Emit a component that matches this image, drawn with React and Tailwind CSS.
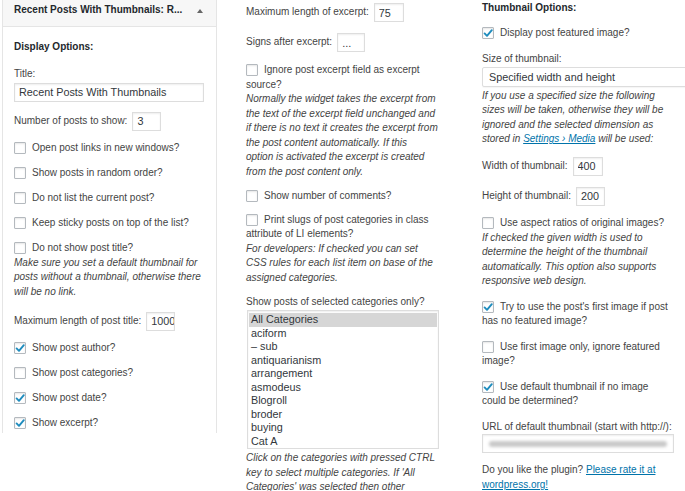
import React from 'react';

// small WordPress-style form bits
function Box({ checked }) {
    return (
        <span className="relative inline-block w-[12px] h-[12px] mr-[6px] align-[-3px] bg-white border border-[#b4b9be] rounded-[1px] shadow-[inset_0_1px_2px_rgba(0,0,0,0.1)]">
            {checked && (
                <svg viewBox="0 0 12 12" className="absolute left-[-1px] top-[-1px] w-[12px] h-[12px]">
                    <path d="M2.6 6.4 L5 8.8 L9.8 3.2" fill="none" stroke="#1e8cbe" strokeWidth="1.9" strokeLinecap="round" strokeLinejoin="round" />
                </svg>
            )}
        </span>
    );
}

function Field({ value, className }) {
    return (
        <input
            readOnly
            value={value}
            className={`h-[19px] border border-[#dddddd] bg-white pl-[4px] text-[10.8px] text-[#32373c] shadow-[inset_0_1px_2px_rgba(0,0,0,0.07)] outline-none ${className}`}
        />
    );
}

function Check({ checked, className = 'mt-[10.5px]', children }) {
    return (
        <p className={className}>
            <Box checked={checked} />
            {children}
        </p>
    );
}

const categories = ['All Categories', 'aciform', '– sub', 'antiquarianism', 'arrangement', 'asmodeus', 'Blogroll', 'broder', 'buying', 'Cat A'];

export default function App() {
    return (
        <div className="w-[685px] h-[491px] overflow-hidden bg-white flex items-start text-[10px] leading-[14.5px] text-[#444] font-['Liberation_Sans',Arial,sans-serif]">
            {/* Widget panel */}
            <div className="ml-[2px] w-[215px] h-[433px] shrink-0 border-x border-[#e5e5e5]">
                <div className="h-[27px] pb-[5px] pl-[11px] pr-[13px] flex items-center justify-between bg-[#f7f7f7] border-b border-[#e5e5e5]">
                    <span className="font-bold text-[#23282d]">Recent Posts With Thumbnails: R...</span>
                    <svg width="6" height="4" viewBox="0 0 6 4"><polygon points="0,4 3,0 6,4" fill="#666" /></svg>
                </div>
                <div className="pl-[11px] pt-[13px]">
                    <p className="font-bold text-[#23282d]">Display Options:</p>
                    <p className="mt-[12.5px]">Title:</p>
                    <Field value="Recent Posts With Thumbnails" className="mt-[1px] w-[190px]" />
                    <div className="mt-[10px] flex items-center gap-[5px]">
                        <span>Number of posts to show:</span>
                        <Field value="3" className="w-[29px]" />
                    </div>
                    <Check>Open post links in new windows?</Check>
                    <Check>Show posts in random order?</Check>
                    <Check>Do not list the current post?</Check>
                    <Check>Keep sticky posts on top of the list?</Check>
                    <Check>Do not show post title?</Check>
                    <em className="block">
                        Make sure you set a default thumbnail for<br />
                        posts without a thumbnail, otherwise there<br />
                        will be no link.
                    </em>
                    <div className="mt-[12.5px] flex items-center gap-[5px]">
                        <span>Maximum length of post title:</span>
                        <Field value="1000" className="w-[29px]" />
                    </div>
                    <Check checked>Show post author?</Check>
                    <Check>Show post categories?</Check>
                    <Check checked>Show post date?</Check>
                    <Check checked>Show excerpt?</Check>
                </div>
            </div>

            {/* Middle column */}
            <div className="ml-[29px] w-[197px] shrink-0 pt-[3px]">
                <div className="flex items-center gap-[5px]">
                    <span>Maximum length of excerpt:</span>
                    <Field value="75" className="w-[30px]" />
                </div>
                <div className="mt-[11px] flex items-center gap-[5px]">
                    <span>Signs after excerpt:</span>
                    <Field value="..." className="w-[28px] h-[18px]" />
                </div>
                <Check className="mt-[11px]">
                    Ignore post excerpt field as excerpt<br />source?
                    <em className="block">
                        Normally the widget takes the excerpt from<br />
                        the text of the excerpt field unchanged and<br />
                        if there is no text it creates the excerpt from<br />
                        the post content automatically. If this<br />
                        option is activated the excerpt is created<br />
                        from the post content only.
                    </em>
                </Check>
                <Check className="mt-[9.5px]">Show number of comments?</Check>
                <Check className="mt-[9.5px]">
                    Print slugs of post categories in class<br />attribute of LI elements?
                    <em className="block">
                        For developers: If checked you can set<br />
                        CSS rules for each list item on base of the<br />
                        assigned categories.
                    </em>
                </Check>
                <p className="mt-[9.5px]">Show posts of selected categories only?</p>
                <div className="mt-[1px] ml-[1px] w-[192px] h-[139px] border border-[#dddddd] bg-white pt-[2px] px-[1px] text-[10.8px] leading-[13.5px] text-[#32373c] shadow-[inset_0_1px_2px_rgba(0,0,0,0.07)]">
                    {categories.map((c, i) => (
                        <div key={c} className={`px-[2px] ${i === 0 ? 'bg-[#d6d6d6]' : ''}`}>{c}</div>
                    ))}
                </div>
                <em className="block mt-[2px]">
                    Click on the categories with pressed CTRL<br />
                    key to select multiple categories. If 'All<br />
                    Categories' was selected then other
                </em>
            </div>

            {/* Thumbnail column */}
            <div className="ml-[39px] w-[203px] shrink-0 pt-[1px]">
                <p className="font-bold text-[#23282d]">Thumbnail Options:</p>
                <Check checked>Display post featured image?</Check>
                <p className="mt-[11.5px]">Size of thumbnail:</p>
                <div className="mt-[0.5px] w-[215px] h-[20px] flex items-center pl-[6px] border border-[#dddddd] rounded-[2px] bg-white text-[10.8px] text-[#32373c] shadow-[0_1px_1px_rgba(0,0,0,0.04)]">
                    Specified width and height
                </div>
                <em className="block mt-[1.5px]">
                    If you use a specified size the following<br />
                    sizes will be taken, otherwise they will be<br />
                    ignored and the selected dimension as<br />
                    stored in <a href="#" className="text-[#0073aa] underline">Settings › Media</a> will be used:
                </em>
                <div className="mt-[10px] flex items-center gap-[5px]">
                    <span>Width of thumbnail:</span>
                    <Field value="400" className="w-[30px]" />
                </div>
                <div className="mt-[11px] flex items-center gap-[5px]">
                    <span>Height of thumbnail:</span>
                    <Field value="200" className="w-[29px]" />
                </div>
                <Check>
                    Use aspect ratios of original images?
                    <em className="block">
                        If checked the given width is used to<br />
                        determine the height of the thumbnail<br />
                        automatically. This option also supports<br />
                        responsive web design.
                    </em>
                </Check>
                <Check checked className="mt-[11px]">
                    Try to use the post's first image if post<br />has no featured image?
                </Check>
                <Check className="mt-[11px]">
                    Use first image only, ignore featured<br />image?
                </Check>
                <Check checked className="mt-[11px]">
                    Use default thumbnail if no image<br />could be determined?
                </Check>
                <p className="mt-[11px] whitespace-nowrap">URL of default thumbnail (start with http://):</p>
                <div className="w-[192px] h-[19px] flex items-center px-[6px] border border-[#dddddd] bg-white shadow-[inset_0_1px_2px_rgba(0,0,0,0.07)]">
                    <div className="h-[6px] w-full rounded-full bg-[#c9c9c9] blur-[1.5px]" />
                </div>
                <p className="mt-[10px]">
                    Do you like the plugin? <a href="#" className="text-[#0073aa] underline">Please rate it at<br />wordpress.org!</a>
                </p>
            </div>
        </div>
    );
}
